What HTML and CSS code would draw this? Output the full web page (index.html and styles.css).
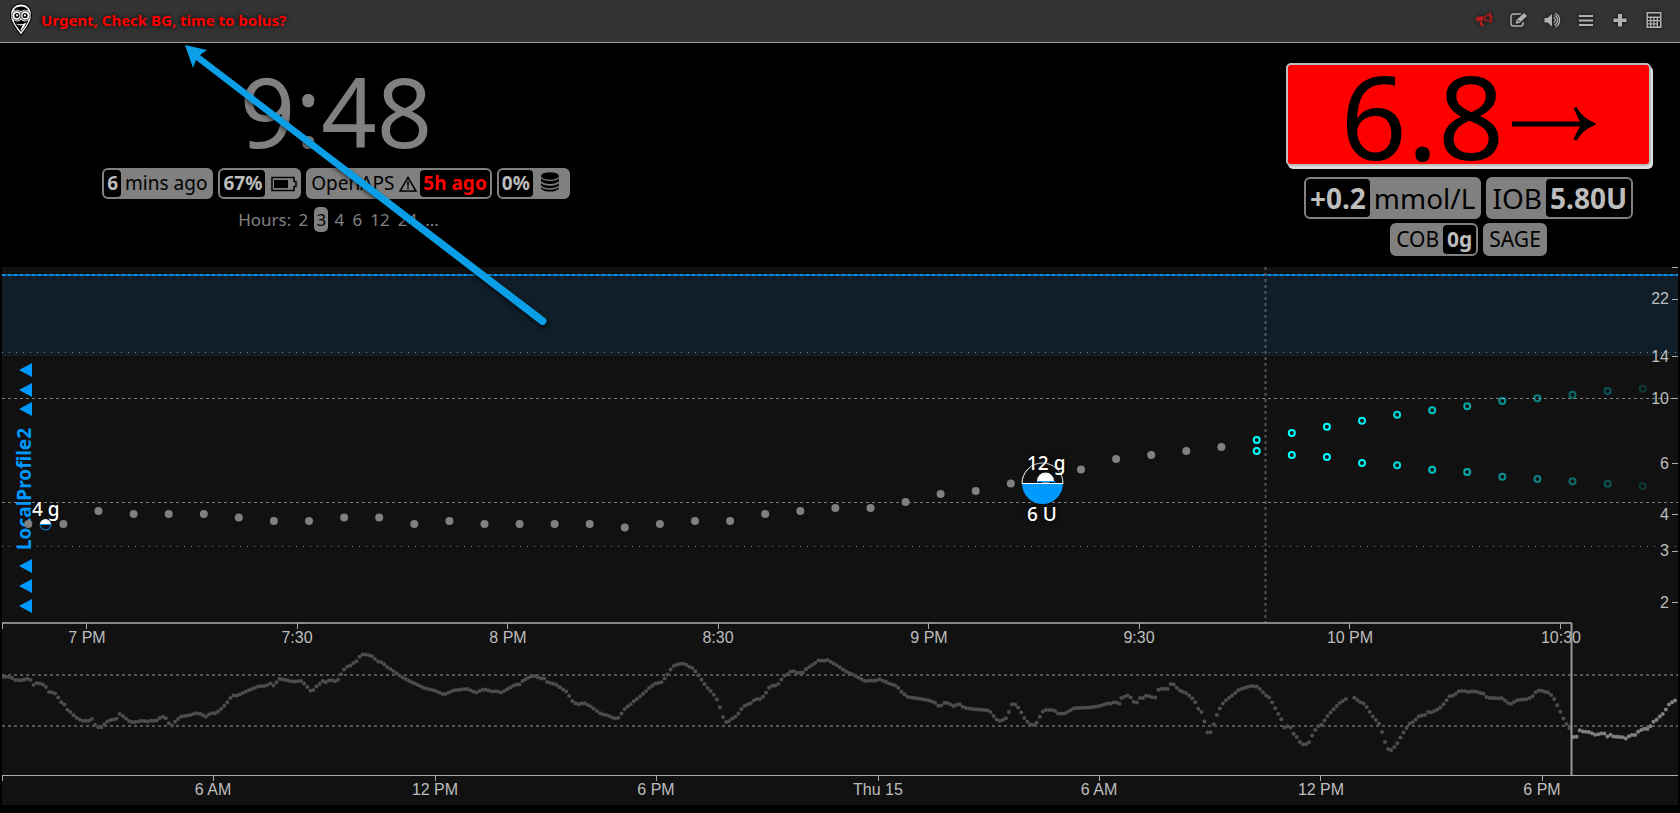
FILE: index.html
```html
<!DOCTYPE html>
<html lang="en">
<head>
<meta charset="utf-8">
<meta name="viewport" content="width=device-width, initial-scale=1">
<title>Nightscout</title>
<link rel="stylesheet" href="styles.css">
</head>
<body>
<header class="toolbar">
  <a class="brand" href="#" aria-label="Nightscout home">
    <svg class="logo" width="24" height="34" viewBox="0 0 24 34" aria-hidden="true">
      <path d="M12 .5C5.500.5 1 5 1 12c0 7.500 6 14 11 21.500 5-7.500 11-14 11-21.500C23 5 18.500.5 12 .5z" fill="#000"/>
      <path d="M12 1.500c-6 0-10 4.500-10 10.500 0 6.500 5.500 13 10 19.500 4.500-6.500 10-13 10-19.500C22 6 18 1.500 12 1.500zM12 3.500c3.500 0 6 1.500 7.500 4-2.500-1-5.500-1-7.500 1-2-2-5-2-7.500-1C6 5 8.500 3.500 12 3.500zM4.500 17c2 2 5.500 2 7.500-.5 2 2.500 5.500 2.500 7.500.5-1 4-4.500 8-7.500 12-3-4-6.500-8-7.500-12z" fill="#fff" fill-rule="evenodd"/>
      <circle cx="7.600" cy="12.500" r="4.700" fill="#fff" stroke="#000" stroke-width=".8"/>
      <circle cx="16.400" cy="12.500" r="4.700" fill="#fff" stroke="#000" stroke-width=".8"/>
      <circle cx="7.900" cy="12.500" r="2.600" fill="#111"/><circle cx="16.100" cy="12.500" r="2.600" fill="#111"/>
      <circle cx="8.100" cy="12.300" r="1.100" fill="#fff"/><circle cx="15.900" cy="12.300" r="1.100" fill="#fff"/>
      <path d="M6.500 20.500c3.500 1.500 7.500 1 11-1-1.500 3.500-3.500 6-5.500 8.500-1-1.500 1-4 2-6-2.500.8-5.500.5-7.500-1.500z" fill="#fff"/>
    </svg>
  </a>
  <h1 class="alarm">Urgent, Check BG, time to bolus?</h1>
  <nav class="tools" aria-label="Tools">
    <button class="tool tool-alarm" aria-label="Silence alarm"><svg viewBox="0 0 20 20"><path d="M16.500 1.500l1.500 11.500c-2.500-1.500-5-2.400-7.700-2.500L9.700 6C12.500 5.500 14.800 4 16.500 1.500zM15.300 5c-1.200 1-2.600 1.600-4 2l.3 2.400c1.500.2 3 .6 4.300 1.300z" fill-rule="evenodd"/><path d="M17 5.300c2 .3 2.400 2.700.5 3.400zM3.200 6.800L9 6.100l.6 4.500-5.800.8c-2.200-.6-2.600-3.800-.6-4.600zM5.500 11.700l2.800-.4c-.3 1.600.6 2.600 1.700 3.700-.8 1.200-2.200 1.400-3.200.9-.6-1.300-1-2.700-1.300-4.200z"/></svg></button>
    <button class="tool" aria-label="Edit"><svg viewBox="0 0 20 20"><path d="M15 12v1.500a2.500 2.500 0 0 1-2.500 2.500h-7A2.500 2.500 0 0 1 3 13.500v-7A2.500 2.500 0 0 1 5.500 4H13" fill="none" stroke="currentColor" stroke-width="1.500"/><path d="M16 3l3 3-7.500 7-3.800.8.800-3.800zM9.500 10.600l1.500 1.500.6-.8-1.300-1.300z" fill-rule="evenodd"/></svg></button>
    <button class="tool" aria-label="Sound"><svg viewBox="0 0 20 20"><path d="M2.500 8h3L10 4v12.500l-4.500-4h-3z"/><path d="M11.500 7.500a3 3 0 0 1 0 5.500M12.500 5.300a5.500 5.500 0 0 1 0 9.900M13.500 3.300a8 8 0 0 1 0 13.900" fill="none" stroke="currentColor" stroke-width="1.300"/></svg></button>
    <button class="tool" aria-label="Menu"><svg viewBox="0 0 20 20"><path d="M3 5h14v2H3zM3 9.500h14v2H3zM3 14h14v2H3z"/></svg></button>
    <button class="tool" aria-label="Add treatment"><svg viewBox="0 0 20 20"><path d="M8 4h4v4.500h4.500v3.500H12v4.500H8V12H3.500V8.500H8z"/></svg></button>
    <button class="tool" aria-label="Bolus calculator"><svg viewBox="0 0 20 20"><path d="M2.500 2h15v16h-15zM4 3.500v3h12v-3zM4 8v2h2V8zm3.300 0v2h2V8zm3.300 0v2h2V8zM14 8v2h2V8zM4 11.300v2h2v-2zm3.300 0v2h2v-2zm3.300 0v2h2v-2zM14 11.300v5h2v-5zM4 14.500v2h2v-2zm3.300 0v2h2v-2zm3.300 0v2h2v-2z" fill-rule="evenodd"/></svg></button>
  </nav>
</header>

<main>
  <section class="summary">
    <div class="status">
      <div class="clock">9:48</div>
      <div class="pills">
        <span class="pill"><b>6</b><span>mins ago</span></span>
        <span class="pill"><b>67%</b><span class="glyph"><svg width="26" height="16" viewBox="0 0 26 16"><path d="M1 1.500h22v4h2v5h-2v4H1z" fill="none" stroke="#000" stroke-width="1.500"/><path d="M3 4h14v8H3z"/></svg></span></span>
        <span class="pill"><span class="loop">OpenAPS<svg width="18" height="16" viewBox="0 0 18 16"><path d="M9 1.500L17 15H1z" fill="none" stroke="#000" stroke-width="1.500"/><path d="M8 5.500h2l-.4 5H8.400zM8.200 11.300h1.600V13H8.200z"/></svg></span><b class="urgent">5h ago</b></span>
        <span class="pill"><b>0%</b><span class="glyph database"><svg width="20" height="20" viewBox="0 0 20 20"><ellipse cx="10" cy="4" rx="9" ry="3.800"/><path d="M1 6.500c3 3.300 15 3.300 18 0V9c-2 4-16 4-18 0zM1 11.200c3 3.300 15 3.300 18 0v2c-2 4-16 4-18 0zM1 15.200c3 3.300 15 3.300 18 0v1c-2 4.500-16 4.500-18 0z"/></svg></span></span>
      </div>
      <nav class="hours" aria-label="Hours shown"><span>Hours:</span><a href="#">2</a><a href="#" class="current">3</a><a href="#">4</a><a href="#">6</a><a href="#">12</a><a href="#">24</a><a href="#">...</a></nav>
    </div>
    <div class="glucose">
      <div class="reading"><span>6.8</span><svg width="84" height="34" viewBox="0 0 84 34" role="img" aria-label="steady"><path d="M0 14.500h68c-2.500-5-4.500-9-6.500-13.500l3-1C69 8 75 13 84 16.500v1C75 21 69 26 65 33.500l-3.500-1c2-4.500 4-8.500 6.500-13H0z"/></svg></div>
      <div class="pills large">
        <span class="pill"><b>+0.2</b><span>mmol/L</span></span>
        <span class="pill"><span>IOB</span><b>5.80U</b></span>
      </div>
      <div class="pills medium">
        <span class="pill"><span>COB</span><b>0g</b></span>
        <span class="pill"><span>SAGE</span></span>
      </div>
    </div>
  </section>

  <section class="charts" aria-label="Glucose charts">
    <svg class="plot" viewBox="2 267 1676 538">
      <rect class="basal-area" x="2" y="275" width="1676" height="81"/>
      <path class="basal-line" d="M2 275H1678"/>
      <path class="basal-dash" d="M2 275H1678"/>
      <path class="limit dotted" d="M2 352.500H1678M2 546.500H1678"/>
      <path class="limit dashed" d="M2 398.500H1678M2 502.500H1678"/>
      <path class="now" d="M1265.500 267V623"/>
      <g class="profile">
        <path d="M19 370l13-7v14zM19 390l13-7v14zM19 409l13-7v14zM19 566l13-7v14zM19 586l13-7v14zM19 606l13-7v14z"/>
        <text transform="translate(31 550) rotate(-90)">LocalProfile2</text>
      </g>
      <g id="readings" class="readings"></g>
      <g id="forecast" class="forecast"></g>
      <g class="treatment">
        <path d="M40 524.500a5.500 5.500 0 0 1 11 0z" fill="#fff"/>
        <path d="M40 524.500a5.500 5.500 0 0 0 11 0z" fill="none" stroke="#0099ff"/>
        <text x="32" y="516">4 g</text>
        <path d="M1022 483.500a20.500 20.500 0 0 1 41 0z" fill="none" stroke="#fff"/>
        <path d="M1022 483.500a20.500 20.500 0 0 0 41 0z" fill="#0099ff"/>
        <path d="M1037 481a8.500 8.500 0 0 1 17 0z" fill="#fff"/>
        <path d="M1037.500 483v-1.500h17v1.500" fill="none" stroke="#0099ff"/>
        <path d="M1022 483.500h41" stroke="#fff"/>
        <text x="1027" y="470">12 g</text>
        <text x="1027" y="521">6 U</text>
      </g>
      <path class="axis" d="M1672 267.500h6M1672 299.500h6M1672 356.500h6M1672 398.500h6M1672 463.500h6M1672 514.500h6M1672 551.500h6M1672 602.500h6"/>
      <g class="label end">
        <text x="1669" y="304">22</text><text x="1669" y="362">14</text><text x="1669" y="404">10</text><text x="1669" y="469">6</text><text x="1669" y="520">4</text><text x="1669" y="556">3</text><text x="1669" y="608">2</text>
      </g>
      <path class="axis heavy" d="M2 623H1572"/>
      <path class="axis" d="M2.500 623v6M86.500 623v6M297.500 623v6M507.500 623v6M718.500 623v6M928.500 623v6M1139.500 623v6M1349.500 623v6M1560.500 623v6"/>
      <g class="label middle">
        <text x="87" y="643">7 PM</text><text x="297" y="643">7:30</text><text x="508" y="643">8 PM</text><text x="718" y="643">8:30</text><text x="929" y="643">9 PM</text><text x="1139" y="643">9:30</text><text x="1350" y="643">10 PM</text><text x="1561" y="643">10:30</text>
      </g>
      <path class="limit overview" d="M2 675H1678M2 726H1678"/>
      <g id="history" class="history"></g>
      <path class="axis window" d="M1571.500 623V775"/>
      <path class="axis" d="M2 775.500H1678M2.500 775v6M213.500 775v6M435.500 775v6M656.500 775v6M878.500 775v6M1099.500 775v6M1320.500 775v6M1542.500 775v6"/>
      <g class="label middle">
        <text x="213" y="795">6 AM</text><text x="435" y="795">12 PM</text><text x="656" y="795">6 PM</text><text x="878" y="795">Thu 15</text><text x="1099" y="795">6 AM</text><text x="1321" y="795">12 PM</text><text x="1542" y="795">6 PM</text>
      </g>
    </svg>
  </section>
</main>

<svg class="pointer" width="380" height="300" viewBox="175 35 380 300" aria-hidden="true">
  <path d="M185 45l22 5-7 5 345 263a3.500 3.500 0 0 1-5 6L196 60l-3 8z"/>
</svg>
<script src="chart.js"></script>
</body>
</html>
```
FILE: styles.css
```css
* { box-sizing: border-box; }
body { margin: 0; background: #000; color: #808080; font-family: "Noto Sans", "Open Sans", sans-serif; position: relative; }
button { font: inherit; }
.toolbar { display: flex; align-items: center; height: 43px; padding: 0 16px 2px 9px; background: #333; border-bottom: 1px solid #999; }
.brand { display: flex; }
.alarm { flex: 1; margin: 0 0 0 8px; color: #f00; font-size: 15px; line-height: 20px; font-weight: 700; text-shadow: 0 0 5px #000; }
.tools { display: flex; gap: 14px; }
.tool { width: 20px; height: 20px; padding: 0; border: 0; background: none; color: #b0b0b0; }
.tool svg { display: block; width: 20px; height: 20px; fill: currentColor; filter: drop-shadow(0 0 2px #111); }
.tool-alarm { color: #b81c1c; }

.summary { display: grid; grid-template-columns: 40fr 35fr 25fr; height: 224px; }
.status { grid-column: 1; display: flex; flex-direction: column; align-items: center; padding-top: 17px; }
.clock { font-size: 97px; line-height: 100px; }
.pills { display: flex; justify-content: center; gap: 5px; font-size: 19px; line-height: 27px; }
.status .pills { margin-top: 8px; }
.pill { display: flex; border: 2px solid #808080; border-radius: 6px; background: #808080; color: #000; white-space: nowrap; }
.pill > span { display: flex; align-items: center; padding: 0 4px; }
.pill b { padding: 0 4px; border-radius: 4px; background: #000; color: #bdbdbd; }
.status .pill b { padding: 0 3px; }
.pill .urgent { color: #f00; }
.pill .glyph { padding: 0 2px 0 6px; }
.pill .database { padding: 0 8px 4px 7px; }
.pill .loop { gap: 5px; padding: 0 3px; }
.hours { display: flex; gap: 4px; margin: 8px 0 0 7px; font-size: 17px; line-height: 25px; }
.hours a { padding: 0 2px; border-radius: 5px; color: inherit; text-decoration: none; min-width: 14px; text-align: center; }
.hours a:first-of-type { margin-left: 1px; }
.hours .current { background: #808080; color: #000; }

.glucose { grid-column: 3; padding: 20px 29px 0 26px; }
.reading { display: flex; align-items: center; justify-content: center; gap: 8px; height: 103px; border: 2px solid #bdbdbd; border-radius: 5px; box-shadow: 2px 3px 0 #ddd; background: #f00; color: #000; font-size: 116px; line-height: 100px; }
.reading svg { margin-top: 18px; }
.large { margin-top: 11px; font-size: 28px; line-height: 38px; }
.medium { margin-top: 4px; font-size: 21px; line-height: 29px; }

.charts { margin: 0 2px; background: #111; }
.plot { display: block; width: 100%; height: auto; }
.basal-area { fill: #0f1e28; }
.basal-line { stroke: #0a5fa0; stroke-width: 2; }
.basal-dash { stroke: #0b8fe8; stroke-width: 2; stroke-dasharray: 3 3; }
.limit { fill: none; stroke: #808080; }
.dashed { stroke-dasharray: 3 3; }
.dotted { stroke-dasharray: 1 6; }
.now { stroke: #555; stroke-width: 2; stroke-dasharray: 3 3; }
.overview { stroke: #555; stroke-width: 2; stroke-dasharray: 3 3; }
.profile { fill: #0099ff; font-size: 19px; font-weight: 700; }
.readings { fill: #808080; }
.forecast { fill: none; stroke: #0ff; stroke-width: 2; }
.treatment text { fill: #fff; font-size: 19px; font-weight: 500; text-shadow: 0 0 5px #000; }
.axis { fill: none; stroke: #aaa; }
.heavy { stroke: #888; stroke-width: 2; }
.window { stroke: #999; stroke-width: 2; }
.label { fill: #bdbdbd; font-family: "Liberation Sans", Arial, sans-serif; font-size: 16px; }
.end { text-anchor: end; }
.middle { text-anchor: middle; }
.history { fill: #4d4d4d; }
.history .active { fill: #808080; }
.pointer { position: absolute; left: 175px; top: 35px; fill: #0a9fe6; filter: drop-shadow(1px 3px 2px rgba(0, 0, 0, .6)); pointer-events: none; }
```
FILE: chart.js
```js
const SVG = "http://www.w3.org/2000/svg";

function dot(group, x, y, r) {
  const c = document.createElementNS(SVG, "circle");
  c.setAttribute("cx", x.toFixed(1));
  c.setAttribute("cy", y.toFixed(1));
  c.setAttribute("r", r);
  group.appendChild(c);
  return c;
}

const readings = document.getElementById("readings");
const levels = [524, 524, 511, 514, 514, 514, 517.500, 521, 521, 517.500, 517.500, 524, 521, 524, 524, 524, 524, 527.500, 524,
  521, 521, 514, 511, 508, 508, 502, 494, 491, 483.500, 481, 469.500, 459, 455, 451, 447];
levels.forEach((y, i) => dot(readings, 28.300 + i * 35.090, y, 4));

const forecast = document.getElementById("forecast");
const high = [440, 433, 426.700, 420.700, 414.700, 410.300, 406.300, 401, 398.300, 394.700, 391, 388.700];
const low = [451, 455, 457, 463, 465.300, 469.700, 472, 476.700, 479, 481.300, 483.700, 486];
const fade = [1, 1, 1, .95, .85, .75, .65, .55, .48, .38, .28, .16];
[high, low].forEach(line => line.forEach((y, i) => {
  dot(forecast, 1256.700 + i * 35.090, y, 3).setAttribute("opacity", fade[i]);
}));

/* Overview runs: x in 1/2.8 px from the block origin, y in 1/3 px below 620. */
const runs = [
  [0, [8,170,30,170,40,180,60,181,75,176,84,176,92,198,100,188,118,192,128,200,134,216,152,218,160,226,169,246,178,248,186,267,196,274,205,285,218,296,230,302,250,302,258,297,266,314,274,322,284,322,298,306,312,299,326,298,333,280,345,289,360,303,372,307,390,304,400,301,410,306,420,302,438,302,452,290,462,290,470,306,480,319,492,303,508,289,530,286,552,279,566,284,575,291,590,280,604,280,616,270,632,253,650,227,665,226,700,209,725,199,746,198,755,188,764,198,772,190,782,176,800,180,820,185,845,183,858,197,867,212,876,212,884,201,892,196,902,182,910,188,926,178,934,184,944,184,952,168,962,151,970,141,978,139,988,129,996,128,1004,113,1014,104,1026,103,1044,110,1056,124,1070,127,1084,141,1104,155,1124,171,1150,185,1190,205,1218,212,1244,224,1270,211,1308,207,1332,218,1356,207,1382,216,1390,211,1400,219,1418,209,1444,193,1452,197,1462,184,1484,170,1500,168,1514,176,1522,174,1532,186,1560,195,1568,202]],
  [1568, [0,202,22,218,30,238,40,249,56,254,64,247,76,254,90,262,104,274,116,283,130,285,160,298,168,287,184,262,194,257,204,246,226,228,250,204,266,191,286,186,298,168,306,157,314,140,330,133,350,130,358,141,366,139,384,160,392,173,410,200,426,218,436,232,445,252,453,280,461,306,470,306,480,297,496,287,504,272,514,259,538,248,546,237,564,237,572,224,580,215,588,198,608,196,616,186,624,170,640,161,650,150,660,158,680,158,692,144,708,134,728,118,737,126,745,118,766,130,780,139,800,154,822,165,856,184,868,181,884,183,892,176,910,185,930,194,944,198,952,212,974,231,1000,235,1028,240,1048,246,1064,262,1072,250,1080,247,1106,260,1115,249,1130,262,1150,267,1200,271,1209,279,1218,295,1230,303,1244,299,1254,290,1261,257,1270,249,1280,260,1288,267,1296,290,1304,298,1314,313,1330,316,1339,301,1347,280,1356,270,1384,270,1392,281,1414,280,1440,264,1480,263,1512,258,1530,251,1544,250,1554,245,1568,252]],
  [3136, [4,234,22,226,32,234,40,248,47,248,55,234,66,234,74,226,98,235,106,210,116,206,134,207,142,192,150,193,166,211,184,218,200,232,210,245,219,266,228,276,236,302,244,337,254,337,262,314,270,287,278,268,288,251,300,237,316,225,332,210,348,204,364,198,382,199,392,207,408,226,418,232,426,248,435,266,444,284,452,298,460,323,470,318,478,323,486,341,494,350,504,367,512,373,522,373,530,366,538,346,546,331,554,319,564,314,572,302,582,286,598,268,616,248,634,236]],
  [3136, [656,233,676,249,684,251,692,263,702,280,710,293,718,302,728,315,736,345,744,372,752,390,762,390,770,378,780,365,788,346,798,331,812,309,822,306,836,289,854,285,866,273,874,280,882,270,892,268,908,250,924,227,934,226,950,213,970,213,978,218,986,213,1000,216,1020,222,1028,234,1070,235,1090,252,1100,250,1108,241,1142,237,1158,227,1166,213,1176,211,1200,218,1208,226,1218,240,1226,260,1235,280,1244,302,1254,319,1262,329]],
  [3136, [1270,351,1280,350,1286,330,1296,335,1314,336,1332,345,1348,340,1356,340,1364,350,1374,344,1382,350,1406,351,1416,356,1430,345,1442,345,1450,336,1466,326,1478,327,1486,318,1494,305,1500,302,1510,290,1520,282,1528,269,1536,254,1548,245,1562,236], true]
];
const overview = document.getElementById("history");
runs.forEach(([origin, points, active]) => {
  let k = 0;
  for (let x = points[0]; x <= points[points.length - 2]; x += 8.610) {
    while (k < points.length - 4 && points[k + 2] < x) k += 2;
    const t = (x - points[k]) / (points[k + 2] - points[k]);
    const y = points[k + 1] + t * (points[k + 3] - points[k + 1]);
    const c = dot(overview, (origin + x) / 2.800, 620 + y / 3, 2);
    if (active) c.setAttribute("class", "active");
  }
});
```
